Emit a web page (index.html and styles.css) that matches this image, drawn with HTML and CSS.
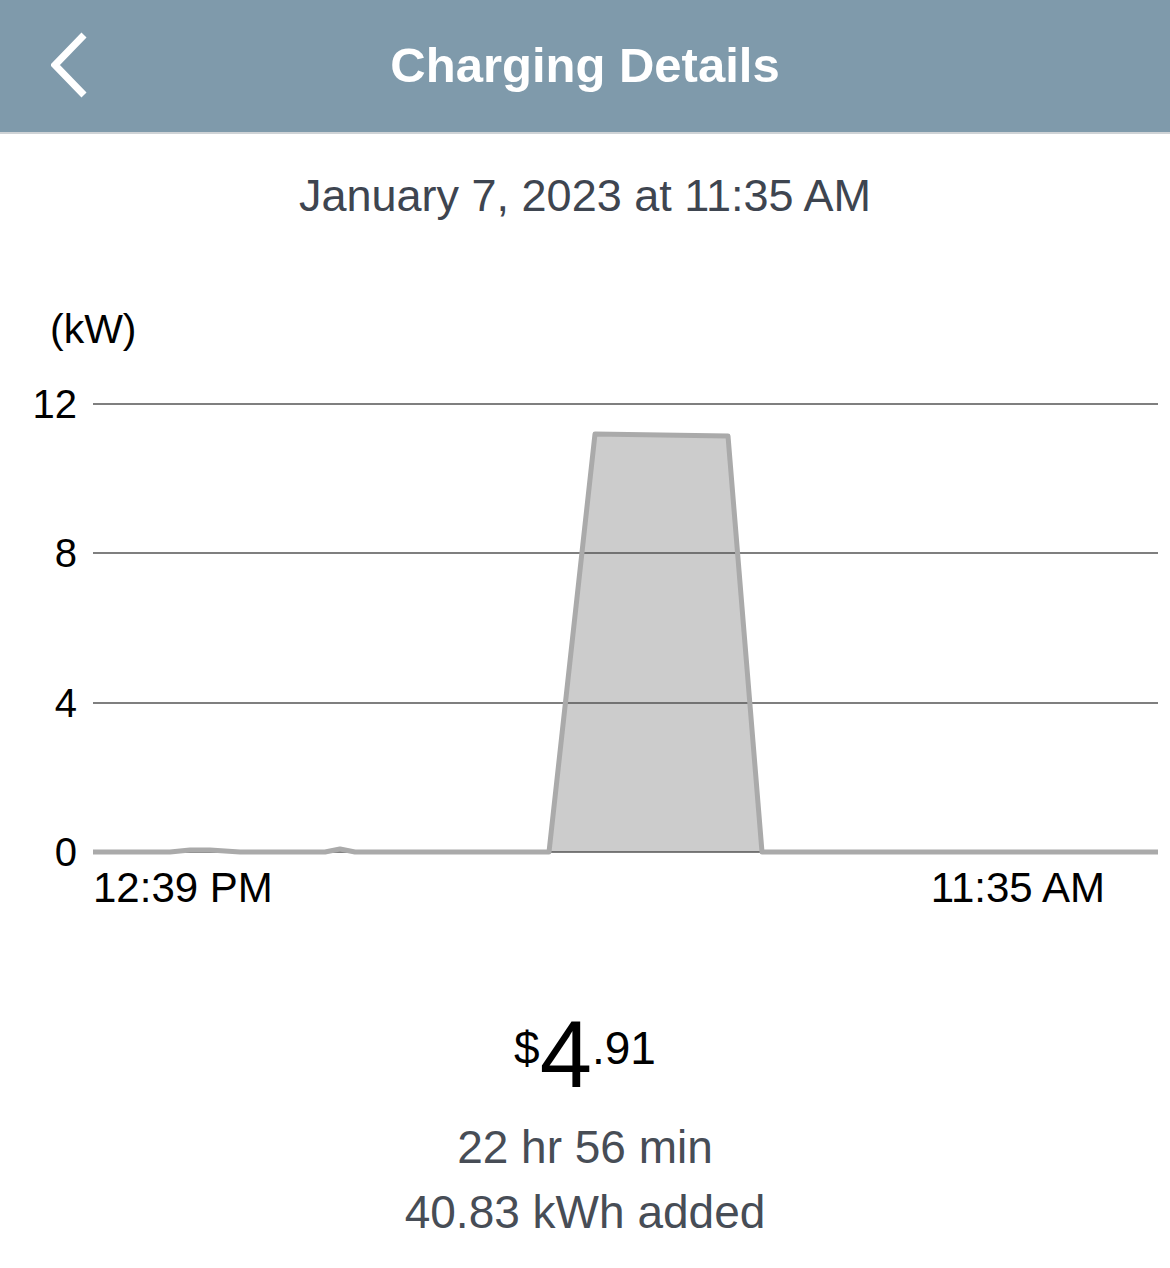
FILE: index.html
```html
<!DOCTYPE html>
<html lang="en">
<head>
  <meta charset="UTF-8" />
  <title>Charging Details</title>
  <link rel="stylesheet" href="styles.css">
</head>
<body>
  <header class="nav-bar">
    <button class="back-btn" aria-label="Back">
      <svg width="40" height="70" viewBox="0 0 40 70">
        <polyline points="33,4 4,34 33,64" fill="none" stroke="#fff" stroke-width="7" stroke-linecap="butt" stroke-linejoin="miter" />
      </svg>
    </button>
    <h1 class="nav-title">Charging Details</h1>
  </header>

  <div class="session-date">January 7, 2023 at 11:35 AM</div>

  <section class="chart">
    <div class="unit-label">(kW)</div>
    <svg class="chart-svg" width="1170" height="560" viewBox="0 0 1170 560">
      <polygon class="series-fill" points="93,492 170,492 190,490 210,490 240,492 325,492 340,489 355,492 549,492 595,74 728,76 762,492 1158,492" />
      <g class="grid">
        <line x1="93" y1="44" x2="1158" y2="44" />
        <line x1="93" y1="193" x2="1158" y2="193" />
        <line x1="93" y1="343" x2="1158" y2="343" />
        <line x1="93" y1="492" x2="1158" y2="492" />
      </g>
      <polyline class="series-line" points="93,492 170,492 190,490 210,490 240,492 325,492 340,489 355,492 549,492 595,74 728,76 762,492 1158,492" />
      <g class="axis-text">
        <text x="77" y="58" text-anchor="end">12</text>
        <text x="77" y="207" text-anchor="end">8</text>
        <text x="77" y="357" text-anchor="end">4</text>
        <text x="77" y="506" text-anchor="end">0</text>
        <text class="time-label" x="93" y="542">12:39 PM</text>
        <text class="time-label" x="1105" y="542" text-anchor="end">11:35 AM</text>
      </g>
    </svg>
  </section>

  <section class="summary">
    <div class="price">
      <span class="price-small">$</span>
      <span class="price-big">4</span>
      <span class="price-small">.91</span>
    </div>
    <div class="summary-line">22 hr 56 min</div>
    <div class="summary-line">40.83 kWh added</div>
  </section>
</body>
</html>
```

FILE: styles.css
```css
body {
  margin: 0;
  font-family: "Liberation Sans", Arial, sans-serif;
  background: #fff;
  color: #000;
}
.nav-bar {
  height: 132px;
  background-color: #7f9aab;
  border-bottom: 2px solid #cfd3d6;
  display: flex;
  align-items: center;
  justify-content: center;
  position: relative;
}
.back-btn {
  position: absolute;
  left: 51px;
  top: 31px;
  padding: 0;
  border: none;
  background: none;
  cursor: pointer;
}
.back-btn svg {
  display: block;
}
.nav-title {
  margin: 0;
  font-size: 49px;
  font-weight: bold;
  color: #fff;
  line-height: 1;
  margin-top: -2px;
}
.session-date {
  margin-top: 36px;
  font-size: 45px;
  line-height: 52px;
  color: #3e4550;
  text-align: center;
}
.chart {
  margin-top: 83px;
}
.unit-label {
  padding-left: 50px;
  font-size: 41px;
  line-height: 48px;
}
.chart-svg {
  display: block;
  margin-top: 7px;
}
.series-fill {
  fill: #cccccc;
  stroke: none;
}
.grid line {
  stroke: #555;
  stroke-width: 1.5;
}
.series-line {
  fill: none;
  stroke: #aaaaaa;
  stroke-width: 5;
  stroke-linejoin: round;
}
.axis-text text {
  font-family: "Liberation Sans", Arial, sans-serif;
  font-size: 40px;
  fill: #000;
}
.axis-text .time-label {
  font-size: 42px;
}
.summary {
  margin-top: 88px;
  text-align: center;
  color: #474d56;
}
.price {
  display: flex;
  justify-content: center;
  align-items: flex-start;
  color: #000;
}
.price-big {
  font-size: 94px;
  line-height: 1;
}
.price-small {
  font-size: 46px;
  line-height: 1;
  margin-top: 17px;
}
.summary-line {
  font-size: 46px;
  line-height: 65px;
}
.summary .price + .summary-line {
  margin-top: 13px;
}
```
